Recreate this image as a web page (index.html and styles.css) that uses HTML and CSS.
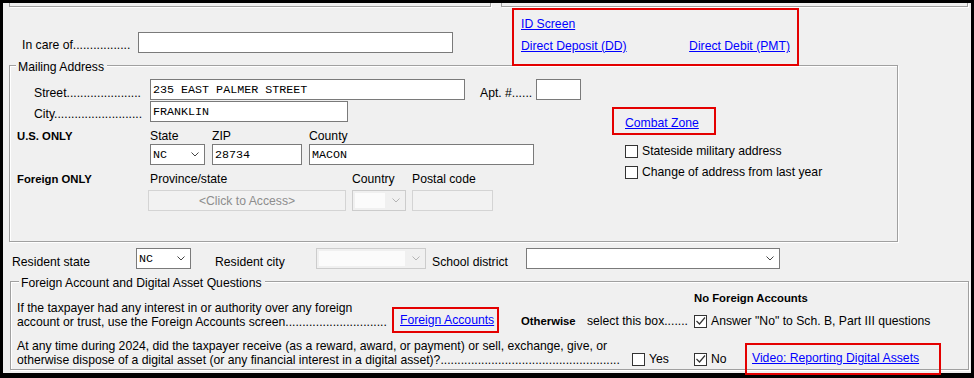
FILE: index.html
```html
<!DOCTYPE html>
<html lang="en">
<head>
    <meta charset="UTF-8">
    <meta name="viewport" content="width=device-width, initial-scale=1.0">
    <title>Taxpayer Address</title>
    <link rel="stylesheet" href="styles.css">
</head>
<body>
<div class="screen">
    <div class="cut-row">
        <div class="cut cut-left"></div>
        <div class="cut cut-right"></div>
    </div>

    <div class="top-row">
        <div class="care-label">In care of.................</div>
        <div class="field care-input"></div>
        <div class="note note-id">
            <a href="#">ID Screen</a>
            <div class="dd-row">
                <a href="#">Direct Deposit (DD)</a>
                <a href="#">Direct Debit (PMT)</a>
            </div>
        </div>
    </div>

    <div class="group mailing">
        <div class="legend">Mailing Address</div>
        <div class="mail-body">
            <div class="mail-left">
                <div class="row row-street">
                    <div class="lbl lbl-street">Street......................</div>
                    <div class="field in-street">235 EAST PALMER STREET</div>
                    <div class="lbl lbl-apt">Apt. #......</div>
                    <div class="field in-apt"></div>
                </div>
                <div class="row row-city">
                    <div class="lbl lbl-street lbl-city">City..........................</div>
                    <div class="field in-city">FRANKLIN</div>
                </div>
                <div class="caps caps-us">
                    <div class="cap-a strong">U.S. ONLY</div>
                    <div class="cap-state">State</div>
                    <div class="cap-zip">ZIP</div>
                    <div>County</div>
                </div>
                <div class="row row-us">
                    <div class="select sel-state">
                        <span class="mono">NC</span>
                        <svg class="chev" width="8" height="5" viewBox="0 0 8 5"><path d="M0.5 0.5 L4 4 L7.5 0.5" fill="none" stroke="#444" stroke-width="1"/></svg>
                    </div>
                    <div class="field in-zip">28734</div>
                    <div class="field in-county">MACON</div>
                </div>
                <div class="caps caps-foreign">
                    <div class="cap-a strong">Foreign ONLY</div>
                    <div class="cap-prov">Province/state</div>
                    <div class="cap-country">Country</div>
                    <div>Postal code</div>
                </div>
                <div class="row row-foreign">
                    <div class="click-box">&lt;Click to Access&gt;</div>
                    <div class="select disabled sel-country">
                        <span class="fill"></span>
                        <svg class="chev" width="8" height="5" viewBox="0 0 8 5"><path d="M0.5 0.5 L4 4 L7.5 0.5" fill="none" stroke="#b4b4b4" stroke-width="1"/></svg>
                    </div>
                    <div class="off-field in-postal"></div>
                </div>
            </div>

            <div class="mail-right">
                <div class="note note-combat"><a href="#">Combat Zone</a></div>
                <div class="check-row check-first"><span class="box"></span>Stateside military address</div>
                <div class="check-row check-second"><span class="box"></span>Change of address from last year</div>
            </div>
        </div>
    </div>

    <div class="row res-row">
        <div class="lbl res-state">Resident state</div>
        <div class="select sel-res">
            <span class="mono">NC</span>
            <svg class="chev" width="8" height="5" viewBox="0 0 8 5"><path d="M0.5 0.5 L4 4 L7.5 0.5" fill="none" stroke="#444" stroke-width="1"/></svg>
        </div>
        <div class="lbl res-city">Resident city</div>
        <div class="select disabled sel-city">
            <span class="fill"></span>
            <svg class="chev" width="8" height="5" viewBox="0 0 8 5"><path d="M0.5 0.5 L4 4 L7.5 0.5" fill="none" stroke="#b4b4b4" stroke-width="1"/></svg>
        </div>
        <div class="lbl res-school">School district</div>
        <div class="select sel-school">
            <span></span>
            <svg class="chev" width="8" height="5" viewBox="0 0 8 5"><path d="M0.5 0.5 L4 4 L7.5 0.5" fill="none" stroke="#444" stroke-width="1"/></svg>
        </div>
    </div>

    <div class="group foreign">
        <div class="legend">Foreign Account and Digital Asset Questions</div>
        <div class="f-row f-row1">
            <div class="q-text">
                <div>If the taxpayer had any interest in or authority over any foreign</div>
                <div>account or trust, use the Foreign Accounts screen..............................</div>
            </div>
            <div class="note note-fa"><a href="#">Foreign Accounts</a></div>
            <div class="otherwise"><span class="strong other-word">Otherwise</span>select this box.......</div>
            <div class="nofa-col">
                <div class="strong">No Foreign Accounts</div>
                <div class="check-row check-answer"><span class="box checked"><svg width="11" height="11" viewBox="0 0 11 11"><path d="M1.5 5 L4.5 8 L10 1.5" fill="none" stroke="#333" stroke-width="1.2"/></svg></span>Answer "No" to Sch. B, Part III questions</div>
            </div>
        </div>
        <div class="f-row f-row2">
            <div class="q-text q-text2">
                <div>At any time during 2024, did the taxpayer receive (as a reward, award, or payment) or sell, exchange, give, or</div>
                <div>otherwise dispose of a digital asset (or any financial interest in a digital asset)?.....................................................</div>
            </div>
            <div class="check-row opt-yes"><span class="box"></span>Yes</div>
            <div class="check-row opt-no"><span class="box checked"><svg width="11" height="11" viewBox="0 0 11 11"><path d="M1.5 5 L4.5 8 L10 1.5" fill="none" stroke="#333" stroke-width="1.2"/></svg></span>No</div>
            <div class="note note-video"><a href="#">Video: Reporting Digital Assets</a></div>
        </div>
    </div>
</div>
</body>
</html>
```

FILE: styles.css
```css
* {
    box-sizing: border-box;
}

body {
    margin: 0;
    background: #000;
    font-family: "Liberation Sans", Arial, sans-serif;
    font-size: 12.2px;
    line-height: 14px;
    color: #000;
}

a {
    color: #0000ff;
    text-decoration: underline;
}

.screen {
    width: 974px;
    height: 378px;
    border: 3px solid #000;
    border-bottom-width: 5px;
    background: #f0f0f0;
}

.strong {
    font-weight: bold;
    font-size: 11.3px;
}

.mono {
    font-family: "Liberation Mono", "Courier New", monospace;
    font-size: 11.7px;
}

/* red call-out boxes drawn over the form */
.note {
    position: relative;
    border: 2px solid #e40000;
}

/* bottoms of the panels above, cut off by the screenshot */
.cut-row {
    display: flex;
    height: 4px;
}

.cut {
    height: 4px;
    border: 1px solid #a0a0a0;
    border-top: 0;
    box-shadow: 1px 1px 0 #fff;
}

.cut-left {
    width: 482px;
    margin-left: 6px;
}

.cut-right {
    width: 467px;
    margin-left: 10px;
}

.top-row {
    display: flex;
    align-items: flex-start;
    height: 58px;
}

.care-label {
    width: 111px;
    margin: 31px 5px 0 19px;
    white-space: nowrap;
}

.field {
    display: flex;
    align-items: center;
    height: 21px;
    padding-left: 2px;
    border: 1px solid #7a7a7a;
    background: #fff;
    font-family: "Liberation Mono", "Courier New", monospace;
    font-size: 11.7px;
}

.care-input {
    width: 315px;
    margin-top: 25px;
}

.note-id {
    width: 287px;
    height: 58px;
    margin: 1px 0 0 59px;
    padding: 7px 7px 0 7px;
}

.dd-row {
    display: flex;
    justify-content: space-between;
    margin-top: 8px;
}

/* group boxes */
.group {
    border: 1px solid #a0a0a0;
    box-shadow: 1px 1px 0 #fff, inset 1px 1px 0 #fff;
}

.legend {
    display: table;
    height: 14px;
    margin: -6px 0 -8px 6px;
    padding: 0 3px 0 2px;
    background: #f0f0f0;
}

.mailing {
    width: 889px;
    height: 177px;
    margin-left: 6px;
}

.mail-body {
    display: flex;
}

.mail-left {
    width: 590px;
    padding-left: 7px;
}

.row {
    display: flex;
    align-items: flex-start;
    height: 21px;
}

.lbl {
    padding-top: 7px;
    white-space: nowrap;
}

.row-street {
    margin-top: 13px;
}

.row-city {
    margin-top: 1px;
}

.lbl-street {
    width: 109px;
    margin: 0 7px 0 17px;
}

.lbl-city {
    padding-top: 6px;
}

.in-street {
    width: 315px;
}

.lbl-apt {
    width: 47px;
    margin: 0 9px 0 15px;
}

.in-apt {
    width: 45px;
}

.in-city {
    width: 198px;
}

.caps {
    display: flex;
    height: 13px;
    line-height: 13px;
    margin-top: 8px;
}

.cap-a {
    width: 133px;
}

.cap-state {
    width: 62px;
}

.cap-zip {
    width: 97px;
}

.cap-prov {
    width: 202px;
}

.cap-country {
    width: 60px;
}

.row-us {
    margin-top: 1px;
    padding-left: 133px;
}

.select {
    display: flex;
    align-items: center;
    justify-content: space-between;
    height: 21px;
    padding: 0 5px 0 2px;
    border: 1px solid #7a7a7a;
    background: #fff;
}

.select.disabled {
    border-color: #cccccc;
    background: #f0f0f0;
    padding: 2px 5px 2px 2px;
}

.select .fill {
    align-self: stretch;
    flex: 1;
    margin-right: 7px;
    background: #fbfbfb;
}

.sel-state {
    width: 55px;
    margin-right: 7px;
}

.in-zip {
    width: 90px;
    margin-right: 7px;
}

.in-county {
    width: 225px;
}

.caps-foreign {
    margin-top: 8px;
}

.row-foreign {
    margin-top: 4px;
    padding-left: 131px;
}

.click-box {
    display: flex;
    align-items: center;
    justify-content: center;
    width: 198px;
    height: 21px;
    margin-right: 6px;
    border: 1px solid #d4d4d4;
    background: #f2f2f2;
    color: #8d8d8d;
}

.sel-country {
    width: 54px;
    margin-right: 6px;
}

.off-field {
    height: 21px;
    border: 1px solid #d4d4d4;
    background: #f2f2f2;
}

.in-postal {
    width: 81px;
}

.mail-right {
    padding-left: 12px;
}

.note-combat {
    width: 104px;
    height: 28px;
    margin-top: 41px;
    padding: 7px 0 0 11px;
}

.check-row {
    display: flex;
    align-items: center;
    height: 13px;
    line-height: 13px;
    white-space: nowrap;
}

.check-first {
    margin: 10px 0 0 13px;
}

.check-second {
    margin: 8px 0 0 13px;
}

.box {
    display: flex;
    align-items: center;
    justify-content: center;
    width: 13px;
    height: 13px;
    margin-right: 4px;
    border: 1px solid #333;
    background: #fff;
}

/* resident row */
.res-row {
    margin-top: 6px;
    padding-left: 9px;
}

.res-state {
    width: 124px;
}

.sel-res {
    width: 55px;
}

.res-city {
    width: 101px;
    margin-left: 24px;
}

.sel-city {
    width: 110px;
    margin-right: 6px;
}

.res-school {
    width: 94px;
}

.sel-school {
    width: 254px;
}

/* foreign account questions */
.foreign {
    width: 959px;
    height: 89px;
    margin: 12px 0 0 7px;
}

.foreign .legend {
    margin-left: 8px;
}

.f-row {
    display: flex;
    align-items: flex-start;
}

.f-row1 {
    margin-top: 9px;
}

.q-text {
    width: 375px;
    margin-left: 6px;
    padding-top: 10px;
    white-space: nowrap;
}

.note-fa {
    width: 107px;
    height: 26px;
    margin-top: 16px;
    padding: 4px 0 0 6px;
}

.otherwise {
    width: 173px;
    margin: 23px 0 0 22px;
    white-space: nowrap;
}

.other-word {
    display: inline-block;
    width: 66px;
}

.check-answer {
    margin-top: 10px;
}

.f-row2 {
    margin-top: 6px;
}

.q-text2 {
    width: 609px;
    padding-top: 0;
}

.opt-yes {
    width: 62px;
    margin: 14px 0 0 6px;
}

.opt-no {
    width: 51px;
    margin-top: 14px;
}

.note-video {
    width: 196px;
    height: 32px;
    margin-top: 4px;
    padding: 6px 0 0 5px;
}
```
